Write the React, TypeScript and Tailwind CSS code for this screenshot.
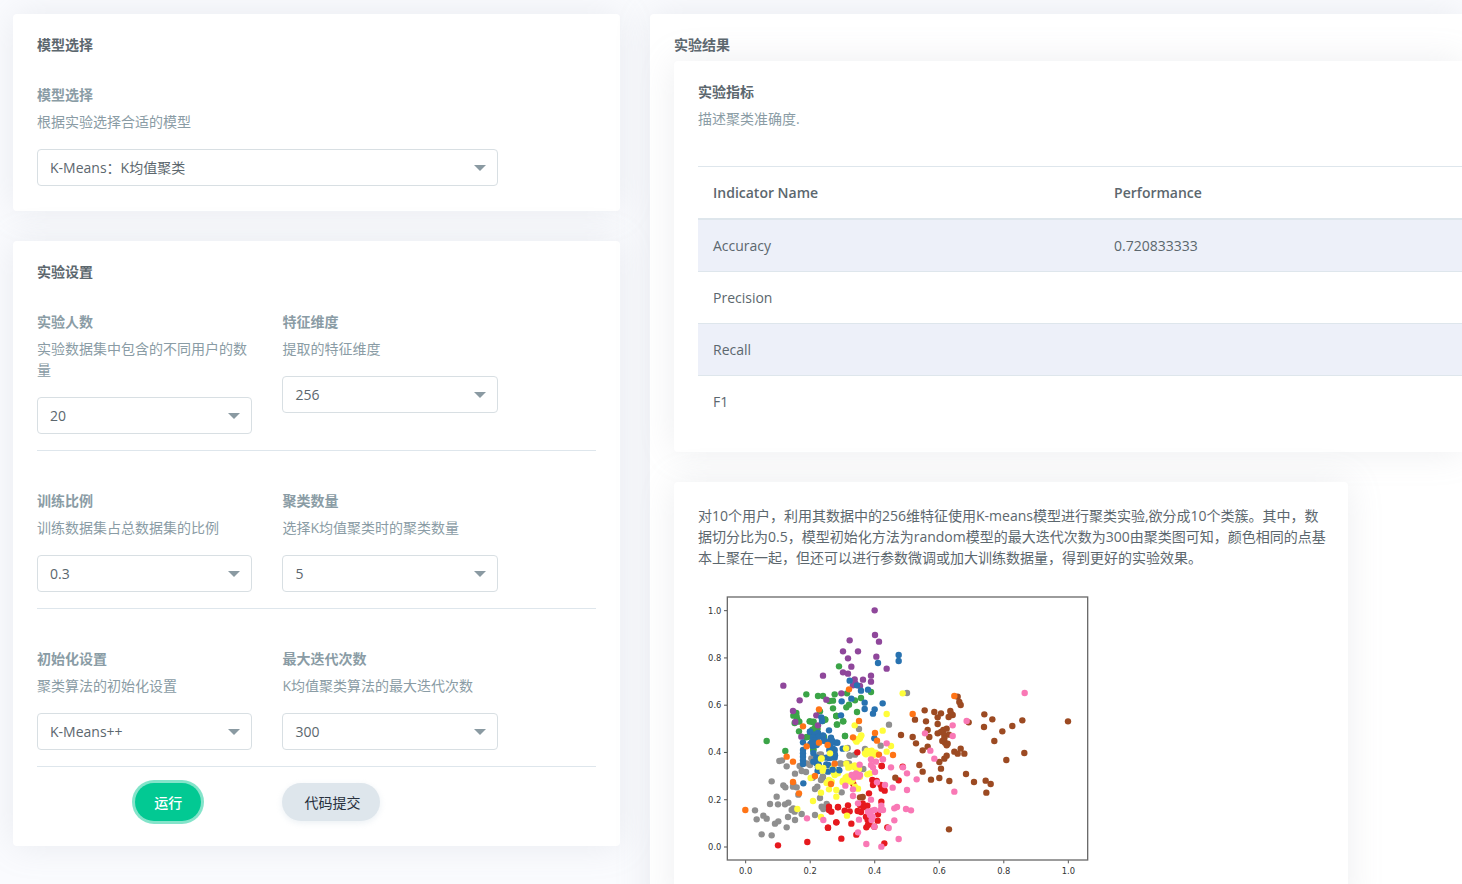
import { useId, type ReactNode } from "react";

function Card({ className = "", children }: { className?: string; children: ReactNode }) {
  return (
    <section className={`bg-white px-6 pt-[23px] pb-[25px] shadow-[0_0_35px_0_rgba(154,161,171,0.18)] ${className}`}>
      {children}
    </section>
  );
}

function CardTitle({ children }: { children: ReactNode }) {
  return <h2 className="text-sm leading-4 font-bold text-[#5c676e]">{children}</h2>;
}

type FieldProps = { label: string; hint: string; options: string[]; className?: string };

function SelectField({ label, hint, options, className = "col-span-5" }: FieldProps) {
  const id = useId();
  return (
    <div className={className}>
      <label htmlFor={id} className="mb-1.5 block font-bold">
        {label}
      </label>
      <p className="mb-[17px]">{hint}</p>
      <div className="relative">
        <select
          id={id}
          className="block h-[37px] w-full appearance-none rounded border border-[#d8dfe3] bg-white px-3 text-sm text-[#5c676e]"
        >
          {options.map((o) => (
            <option key={o}>{o}</option>
          ))}
        </select>
        <svg
          viewBox="0 0 12 6"
          className="pointer-events-none absolute top-4 right-3 h-1.5 w-3 fill-[#8a9aa2]"
          aria-hidden="true"
        >
          <path d="M0 0h12L6 6z" />
        </svg>
      </div>
    </div>
  );
}

const fieldRows: FieldProps[][] = [
  [
    { label: "实验人数", hint: "实验数据集中包含的不同用户的数量", options: ["20"] },
    { label: "特征维度", hint: "提取的特征维度", options: ["256"] },
  ],
  [
    { label: "训练比例", hint: "训练数据集占总数据集的比例", options: ["0.3"] },
    { label: "聚类数量", hint: "选择K均值聚类时的聚类数量", options: ["5"] },
  ],
  [
    { label: "初始化设置", hint: "聚类算法的初始化设置", options: ["K-Means++"] },
    { label: "最大迭代次数", hint: "K均值聚类算法的最大迭代次数", options: ["300"] },
  ],
];

const metrics = [
  ["Accuracy", "0.720833333"],
  ["Precision", ""],
  ["Recall", ""],
  ["F1", ""],
];

// Each batch holds "x,y" pairs measured from its own corner of the plot.
type Batch = { color: string; at: [number, number]; pts: string };

const GRAY = "#8f8f8f";
const GREEN = "#3ba447";
const PURPLE = "#8f479b";
const BLUE = "#2872b0";
const RED = "#e6191e";
const PINK = "#f978b5";
const ORANGE = "#ff7416";
const YELLOW = "#fffd3a";
const BROWN = "#9c4a22";

const LEFT: [number, number] = [6, 15];
const TOP: [number, number] = [246, 45];
const MID: [number, number] = [261, 270];
const LOW: [number, number] = [246, 405];
const RIGHT: [number, number] = [546, 165];

const batches: Batch[] = [
  { color: GRAY, at: LEFT, pts: "165,661 170,688 190,677 200,686 185,733 215,736 210,642 230,620 234,643 215,574 255,643 265,638 225,701 235,694 264,681 260,712 285,690 280,655 275,660 284,665 305,672 345,675 238,513 246,511 260,529 250,586 256,592 279,590 280,582 290,592 285,551 299,528 305,543 318,546 334,505 338,563 345,597 352,590 360,624 365,650 370,657 380,642 358,494 369,560 366,568 295,614 320,520" },
  { color: GRAY, at: TOP, pts: "237,387" },
  { color: GRAY, at: MID, pts: "108,238 82,258 75,270 113,305 108,315 192,265 194,241 188,219 169,266 240,222 235,282" },
  { color: GRAY, at: LOW, pts: "201,85 209,107 225,104 229,143 200,130 185,217 255,90 180,130" },
  { color: GRAY, at: RIGHT, pts: "81,159 27,254 2,317" },
  { color: GREEN, at: LEFT, pts: "200,453 256,483 319,313 354,318 369,318 399,332 404,313 417,229 399,355 409,378 411,403 280,377 289,369 290,380 292,388 284,399 298,395 297,424 329,394 338,396 360,364 375,388 347,412 340,420 352,418 318,442 328,440 340,479 372,440 388,333" },
  { color: GREEN, at: MID, pts: "75,139 86,140 113,138 121,134 97,160 90,158 82,164 66,186 85,224 155,123 175,139 180,183" },
  { color: GREEN, at: TOP, pts: "273,276 243,294 225,301 207,314 199,322 231,336 189,364 171,374 169,348 195,408 201,280" },
  { color: PURPLE, at: LEFT, pts: "250,287 369,257 299,331 279,363 379,329 286,396 349,376 354,406 304,440" },
  { color: PURPLE, at: TOP, pts: "284,31 285,105 297,125 209,121 189,154 234,154 204,175 289,170 214,200 189,217 204,221 224,238 249,239 273,227 273,245 226,250 240,258 219,256 184,280" },
  { color: PURPLE, at: RIGHT, pts: "20,86" },
  { color: BLUE, at: LEFT, pts: "310,580 309,457 309,480 309,490 309,500 309,511 309,522 330,425 340,440 345,448 354,430 369,438 387,421 364,382 366,393 393,443 397,453 409,458 390,465 375,453 388,480 404,480 389,504 404,492 404,503 380,525 384,545 340,489 349,502 354,510 349,520 354,532 354,543 331,462 338,468 350,465 340,455 416,540" },
  { color: BLUE, at: MID, pts: "75,170 90,178 99,174 84,188 100,186 114,181 88,196 80,202 116,197 138,190 135,202 144,203 157,203 145,222 173,221 135,224 124,248 133,248 142,247 150,241 130,270 124,268 143,284 101,268 98,288 85,260" },
  { color: BLUE, at: TOP, pts: "209,242 231,256 243,272 264,269 214,296 254,308 254,327 284,328 279,341 185,304 183,346 283,415" },
  { color: BLUE, at: RIGHT, pts: "56,45 56,63 8,190 -6,69" },
  { color: RED, at: LEFT, pts: "234,766 322,756 387,650 387,660 394,665 384,713 409,697 414,651" },
  { color: RED, at: LOW, pts: "232,97 267,94 305,138 277,180 290,183 279,195 302,195 305,206 314,212 267,220 204,256 194,272 209,274 233,273 243,276 248,250 262,257 250,262 240,255 258,290 263,300 268,310 259,322 264,315 294,283 293,302 214,311 229,344 169,307 144,323 184,356 174,262 283,320 304,245 220,192" },
  { color: RED, at: RIGHT, pts: "5,378 56,421 68,380 22,562 13,610" },
  { color: YELLOW, at: LEFT, pts: "292,657 339,633 363,681 363,608 332,564 363,506 380,579 387,570 387,598 409,600 409,620 390,490 402,545 404,555 414,550 368,542 355,530 398,535" },
  { color: YELLOW, at: TOP, pts: "224,376 243,408 236,416" },
  { color: YELLOW, at: MID, pts: "229,181 222,193 215,200 210,192 110,250 115,279 184,266 209,271 222,281 182,308 174,317 190,312 198,320 180,324 147,294 150,288 183,220 262,242 270,238 243,238" },
  { color: YELLOW, at: LOW, pts: "228,62 240,55 205,143 231,147 215,140 255,100 261,92 267,98 279,104 287,98 275,92 202,169 198,178 195,187 208,183 213,175 218,180 188,186 234,206 225,200 262,163 270,160 201,287 240,170 155,185" },
  { color: YELLOW, at: RIGHT, pts: "68,160 20,222 8,272 33,318 20,335" },
  { color: BLUE, at: MID, pts: "163,286 143,284" },
  { color: ORANGE, at: LEFT, pts: "136,660 260,500 279,515 279,576 297,610 309,409 357,358 320,469 357,458 383,465 345,558 404,521 393,582" },
  { color: ORANGE, at: TOP, pts: "207,268 237,363 285,399 219,412 291,422" },
  { color: ORANGE, at: LOW, pts: "297,104" },
  { color: BROWN, at: LOW, pts: "240,232 248,231" },
  { color: BROWN, at: RIGHT, pts: "233,170 238,186 242,195 134,211 163,216 183,220 173,232 211,213 218,225 206,231 213,221 105,239 138,244 173,252 143,270 148,291 63,285 98,291 108,310 143,320 128,331 118,375 128,395 153,419 178,414 183,386 178,366 193,356 200,347 208,423 223,335 233,341 242,326 253,341 258,402 282,426 317,422 332,432 319,458 379,360 433,339 343,303 367,274 397,258 427,241 337,238 313,223 312,261 266,247 564,244 207,568 173,280 183,276 190,270 200,266 193,285 207,284 187,303 195,308 203,311 200,316 193,295 46,413" },
  { color: ORANGE, at: RIGHT, pts: "98,222 39,345 223,168" },
  { color: PINK, at: LEFT, pts: "321,685 370,690" },
  { color: PINK, at: LOW, pts: "215,165 228,160 240,165 222,172 236,170 239,134 273,118 288,125 285,156 279,142 273,135 196,197 219,228 219,208 273,239 234,250 291,187 237,299 264,275 276,272 284,270 270,285 278,290 275,300 283,320 234,337 259,372 304,257 302,270 309,270 309,118 315,195" },
  { color: PINK, at: RIGHT, pts: "20,310 8,358 33,382 69,382 81,400 110,418 38,443 81,450 43,505 51,501 78,507 93,511 43,541 26,564 56,597 4,620 223,455 135,280 151,332 163,356 218,256 218,288 260,243 434,159" },
];

const ticks = ["0.0", "0.2", "0.4", "0.6", "0.8", "1.0"];

function ScatterPlot() {
  return (
    <svg viewBox="0 0 1200 900" className="block w-[400px] max-w-full" role="img" aria-label="K-means">
      {batches.map((b, i) => (
        <g key={i} fill={b.color} transform={`translate(${b.at[0]} ${b.at[1]})`}>
          {b.pts.split(" ").map((p) => {
            const [x, y] = p.split(",");
            return <circle key={p} cx={x} cy={y} r={9.6} />;
          })}
        </g>
      ))}
      <rect x="88" y="36" width="1081" height="789" fill="none" stroke="#6b6b6b" strokeWidth="4" />
      <g fill="#333" stroke="none" fontFamily="DejaVu Sans, sans-serif" fontSize="25">
        {ticks.map((t, i) => {
          const x = 143 + i * 193.6;
          const y = 786 - i * 141.8;
          return (
            <g key={t}>
              <path d={`M${x} 826v9M87 ${y}h-9`} stroke="#555" strokeWidth="3" />
              <text x={x} y="867" textAnchor="middle">
                {t}
              </text>
              <text x="70" y={y + 9} textAnchor="end">
                {t}
              </text>
            </g>
          );
        })}
      </g>
    </svg>
  );
}

export default function App() {
  return (
    <main
      lang="zh-CN"
      className="grid min-h-screen grid-cols-[minmax(0,607fr)_minmax(0,812fr)] gap-x-[30px] overflow-hidden bg-[#fafbfe] pt-3.5 pl-[13px] font-['Open_Sans','Noto_Sans_CJK_SC',sans-serif] text-sm leading-[21px] text-[#8a9ca5]"
    >
      <div className="flex flex-col gap-[30px]">
        <Card className="rounded">
          <CardTitle>模型选择</CardTitle>
          <div className="mt-[31px] grid grid-cols-12 gap-x-[30px]">
            <SelectField
              className="col-span-10"
              label="模型选择"
              hint="根据实验选择合适的模型"
              options={["K-Means：K均值聚类"]}
            />
          </div>
        </Card>

        <Card className="rounded">
          <CardTitle>实验设置</CardTitle>
          <form className="mt-[31px]" onSubmit={(e) => e.preventDefault()}>
            <div className="flex flex-col gap-[39px]">
              {fieldRows.map((row, i) => (
                <div key={i} className="grid grid-cols-12 gap-x-[30px] border-b border-[#dee6ec] pb-4">
                  {row.map((f) => (
                    <SelectField key={f.label} {...f} />
                  ))}
                </div>
              ))}
            </div>
            <div className="mt-4 grid grid-cols-12 gap-x-[30px]">
              <button
                type="submit"
                className="col-span-3 col-start-3 h-[38px] justify-self-start rounded-full bg-[#02c993] px-[19px] font-medium text-white ring-3 ring-[#84e4ca]"
              >
                运行
              </button>
              <button
                type="button"
                className="col-span-4 col-start-6 h-[38px] justify-self-start rounded-full bg-[#dee6ec] pr-5 pl-[22px] text-[#27303c] shadow-[0_2px_6px_0_rgba(222,230,236,0.6)]"
              >
                代码提交
              </button>
            </div>
          </form>
        </Card>
      </div>

      <Card className="rounded-l">
        <CardTitle>实验结果</CardTitle>
        <div className="mt-2 -mr-6 flex flex-col gap-[30px]">
          <Card className="rounded-l pr-0">
            <CardTitle>实验指标</CardTitle>
            <p className="mt-2">描述聚类准确度.</p>
            <table className="mt-[37px] w-full table-fixed border-separate border-spacing-0 text-left text-[#5c676e]">
              <thead>
                <tr>
                  <th className="w-[52.5%] border-t border-b-2 border-[#dee6ec] p-[15px] font-semibold">
                    Indicator Name
                  </th>
                  <th className="border-t border-b-2 border-[#dee6ec] p-[15px] font-semibold">Performance</th>
                </tr>
              </thead>
              <tbody className="[&>tr:not(:first-child)>td]:border-t">
                {metrics.map(([name, value]) => (
                  <tr key={name} className="odd:bg-[#edf0f9]">
                    <td className="border-[#dee6ec] p-[15px]">{name}</td>
                    <td className="border-[#dee6ec] p-[15px]">{value}</td>
                  </tr>
                ))}
              </tbody>
            </table>
          </Card>

          <Card className="w-[85.5%] rounded">
            <p className="-mr-1 text-[#5c676e]">
              对10个用户，利用其数据中的256维特征使用K-means模型进行聚类实验,欲分成10个类簇。其中，数据切分比为0.5，模型初始化方法为random模型的最大迭代次数为300由聚类图可知，颜色相同的点基本上聚在一起，但还可以进行参数微调或加大训练数据量，得到更好的实验效果。
            </p>
            <div className="mt-[17px]">
              <ScatterPlot />
            </div>
          </Card>
        </div>
      </Card>
    </main>
  );
}
